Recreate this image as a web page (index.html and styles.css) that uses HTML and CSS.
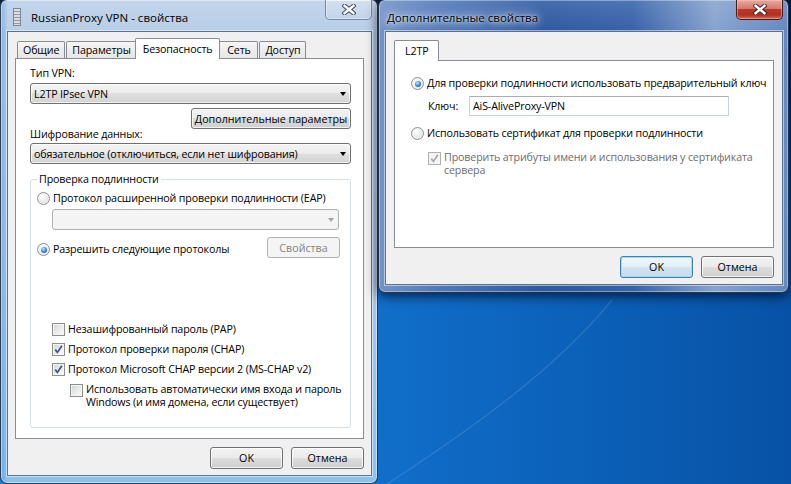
FILE: index.html
```html
<!DOCTYPE html>
<html lang="ru">
<head>
  <meta charset="UTF-8" />
  <title>RussianProxy VPN - свойства</title>
  <link rel="stylesheet" href="styles.css">
</head>
<body>
  <div class="desktop">
    <svg class="wall-arc" width="791" height="484" viewBox="0 0 791 484">
      <path d="M384 486 C470 430 555 370 612 300" fill="none" stroke="rgba(255,255,255,0.13)" stroke-width="1.2"/>
    </svg>

    <!-- Свойства подключения -->
    <div class="window win-main">
      <div class="titlebar">
        <svg class="title-icon" width="8" height="18" viewBox="0 0 8 18">
          <rect x="0.5" y="0.5" width="7" height="17" fill="#d9dee6" stroke="#7d8796"/>
          <path d="M1 3.5h6M1 6.5h6M1 9.5h6M1 12.5h6M1 15.5h6" stroke="#8f99a8"/>
        </svg>
        <span class="title-text">RussianProxy VPN - свойства</span>
        <span class="close-btn">
          <svg width="14" height="11" viewBox="0 0 14 11">
            <path d="M2.5 1.8L11.5 9.2M11.5 1.8L2.5 9.2" stroke="#3d4654" stroke-width="4.4" stroke-linecap="square"/>
            <path d="M2.5 1.8L11.5 9.2M11.5 1.8L2.5 9.2" stroke="#fff" stroke-width="2.4" stroke-linecap="square"/>
          </svg>
        </span>
      </div>
      <div class="client">
        <div class="tabs">
          <span class="tab">Общие</span>
          <span class="tab">Параметры</span>
          <span class="tab selected">Безопасность</span>
          <span class="tab">Сеть</span>
          <span class="tab">Доступ</span>
        </div>
        <div class="tab-panel panel-security">
          <div class="field-label">Тип VPN:</div>
          <div class="combo"><span>L2TP IPsec VPN</span><span class="combo-arrow"></span></div>
          <div class="btn-line"><button class="btn btn-wide">Дополнительные параметры</button></div>
          <div class="field-label label-tight">Шифрование данных:</div>
          <div class="combo combo-second"><span>обязательное (отключиться, если нет шифрования)</span><span class="combo-arrow"></span></div>

          <fieldset class="group">
            <legend>Проверка подлинности</legend>
            <div class="option option-eap"><span class="radio"></span>Протокол расширенной проверки подлинности (EAP)</div>
            <div class="combo disabled combo-eap"><span class="combo-arrow"></span></div>
            <div class="option-line">
              <div class="option option-allow"><span class="radio checked"></span>Разрешить следующие протоколы</div>
              <button class="btn disabled">Свойства</button>
            </div>
            <div class="protocols">
              <div class="check-option"><span class="checkbox"></span>Незашифрованный пароль (PAP)</div>
              <div class="check-option"><span class="checkbox"><svg width="11" height="11" viewBox="0 0 11 11"><path d="M2.2 5.6L4.4 8.4L8.9 1.8" fill="none" stroke="#3f5483" stroke-width="1.7"/></svg></span>Протокол проверки пароля (CHAP)</div>
              <div class="check-option"><span class="checkbox"><svg width="11" height="11" viewBox="0 0 11 11"><path d="M2.2 5.6L4.4 8.4L8.9 1.8" fill="none" stroke="#3f5483" stroke-width="1.7"/></svg></span>Протокол Microsoft CHAP версии 2 (MS-CHAP v2)</div>
              <div class="check-option multi nested"><span class="checkbox"></span><span class="multi-text">Использовать автоматически имя входа и пароль<br>Windows (и имя домена, если существует)</span></div>
            </div>
          </fieldset>
        </div>
        <div class="dialog-buttons">
          <button class="btn">OK</button>
          <button class="btn">Отмена</button>
        </div>
      </div>
    </div>

    <!-- Дополнительные свойства L2TP -->
    <div class="window win-extra">
      <div class="titlebar">
        <span class="title-text glow">Дополнительные свойства</span>
        <span class="close-btn close-active">
          <svg width="14" height="11" viewBox="0 0 14 11">
            <path d="M2.5 1.8L11.5 9.2M11.5 1.8L2.5 9.2" stroke="#3d2a2a" stroke-width="4.4" stroke-linecap="square"/>
            <path d="M2.5 1.8L11.5 9.2M11.5 1.8L2.5 9.2" stroke="#fff" stroke-width="2.4" stroke-linecap="square"/>
          </svg>
        </span>
      </div>
      <div class="client client-extra">
        <div class="tabs">
          <span class="tab selected single">L2TP</span>
        </div>
        <div class="tab-panel panel-l2tp">
          <div class="option"><span class="radio checked"></span>Для проверки подлинности использовать предварительный ключ</div>
          <div class="key-line">
            <span class="key-label">Ключ:</span>
            <span class="textbox">AiS-AliveProxy-VPN</span>
          </div>
          <div class="option option-cert"><span class="radio"></span>Использовать сертификат для проверки подлинности</div>
          <div class="check-option multi disabled cert-check">
            <span class="checkbox"><svg width="11" height="11" viewBox="0 0 11 11"><path d="M2.2 5.6L4.4 8.4L8.9 1.8" fill="none" stroke="#a7a7a7" stroke-width="1.7"/></svg></span>
            <span class="multi-text">Проверить атрибуты имени и использования у сертификата<br>сервера</span>
          </div>
        </div>
        <div class="dialog-buttons">
          <button class="btn default">OK</button>
          <button class="btn">Отмена</button>
        </div>
      </div>
    </div>
  </div>
</body>
</html>
```

FILE: styles.css
```css
* {
  box-sizing: border-box;
}

html, body {
  margin: 0;
  height: 100%;
}

body {
  font-family: "Open Sans", "Noto Sans", sans-serif;
  font-size: 10.7px;
  letter-spacing: -0.15px;
  color: #000;
  overflow: hidden;
}

/* рабочий стол */
.desktop {
  position: relative;
  width: 791px;
  height: 484px;
  overflow: hidden;
  background:
    linear-gradient(to bottom, rgba(4, 20, 52, 0.9) 0, rgba(4, 20, 52, 0.4) 140px, rgba(4, 20, 52, 0) 300px),
    linear-gradient(to right, #1d84da 0, #1170cc 45%, #0752a6 100%);
}

.wall-arc {
  position: absolute;
  left: 0;
  top: 0;
}

/* окна */
.window {
  position: absolute;
  top: -1px;
  display: flex;
  flex-direction: column;
  border: 1px solid rgba(22, 36, 58, 0.85);
  border-radius: 7px;
}

.win-main {
  left: 0;
  width: 378px;
  height: 485px;
  background:
    linear-gradient(to right, rgba(40, 125, 215, 0.35) 0, rgba(40, 125, 215, 0) 7px),
    linear-gradient(to bottom, #c3d5eb 0, #b6cce7 40px, #a9c6e7 60%, #8dc2ee 100%);
  box-shadow: inset 0 0 0 1px rgba(255, 255, 255, 0.45);
}

.win-extra {
  left: 378px;
  width: 411px;
  height: 294px;
  background:
    linear-gradient(to bottom, rgba(255, 255, 255, 0.12) 0, rgba(255, 255, 255, 0) 31px),
    linear-gradient(to right, #7393c7 0, #527ab9 14%, #2e5aa2 40%, #3763a9 62%, #87a3ce 82%, #6488c2 100%);
  box-shadow: 0 3px 12px rgba(0, 8, 30, 0.75), inset 0 0 0 1px rgba(255, 255, 255, 0.35);
}

.titlebar {
  flex: none;
  height: 31px;
  display: flex;
  align-items: flex-start;
  padding: 0 5px 0 8px;
}

.title-icon {
  margin: 8px 0 0 4px;
}

.title-text {
  margin: 10px 0 0 10px;
  font-size: 11.5px;
  letter-spacing: 0;
  line-height: 15px;
  white-space: nowrap;
}

.title-text.glow {
  margin-left: 0;
  text-shadow: 0 0 8px rgba(255, 255, 255, 0.95), 0 0 14px rgba(255, 255, 255, 0.8), 0 0 3px rgba(255, 255, 255, 0.9);
}

.close-btn {
  margin-left: auto;
  width: 47px;
  height: 20px;
  display: flex;
  align-items: center;
  justify-content: center;
  border: 1px solid rgba(60, 80, 110, 0.6);
  border-top: none;
  border-radius: 0 0 5px 5px;
  background: linear-gradient(to bottom, rgba(255, 255, 255, 0.28), rgba(255, 255, 255, 0.08));
  box-shadow: inset 0 0 0 1px rgba(255, 255, 255, 0.4);
}

.close-btn.close-active {
  border-color: #4a1a14;
  background: linear-gradient(to bottom, #e7aa9f 0, #d4796c 45%, #b93a2b 50%, #b02f20 78%, #d46a50 100%);
  box-shadow: inset 0 0 0 1px rgba(255, 210, 200, 0.45);
}

.client {
  flex: 1;
  display: flex;
  flex-direction: column;
  margin: 0 5px 7px 6px;
  padding: 6px 7px 6px;
  border: 1px solid #5d718b;
  background: #f0f0f0;
  box-shadow: 0 0 0 1px rgba(255, 255, 255, 0.5);
}

.client-extra {
  padding: 8px 8px 6px 8px;
}

/* вкладки */
.tabs {
  flex: none;
  display: flex;
  align-items: flex-end;
  height: 21px;
  margin-bottom: -1px;
  padding-left: 2px;
  position: relative;
  z-index: 1;
}

.tab {
  min-width: 39px;
  height: 17px;
  margin-bottom: 1px;
  margin-right: 1px;
  padding: 0 5px;
  line-height: 16px;
  text-align: center;
  border: 1px solid #898c95;
  border-bottom: none;
  border-radius: 2px 2px 0 0;
  background: linear-gradient(to bottom, #f5f5f5, #e6e6e6);
  white-space: nowrap;
}

.tab.selected {
  height: 21px;
  margin: 0 -1px 0 -3px;
  padding: 2px 7px 0;
  background: #fff;
}

.tab.single {
  margin-left: -2px;
  padding: 2px 10px 0;
}

.tab-panel {
  flex: 1;
  background: #fff;
  border: 1px solid #898c95;
}

/* Безопасность */
.panel-security {
  padding: 7px 12px 0 14px;
}

.field-label {
  line-height: 15px;
}

.label-tight {
  margin-top: -2px;
}

.combo {
  height: 21px;
  margin-top: 2px;
  display: flex;
  align-items: center;
  padding-left: 3px;
  border: 1px solid #707070;
  border-radius: 3px;
  background: linear-gradient(to bottom, #f3f3f3 0, #ececec 50%, #dfdfdf 50%, #d3d3d3 100%);
  box-shadow: inset 0 0 0 1px rgba(255, 255, 255, 0.7);
  white-space: nowrap;
}

.combo-second {
  margin-top: 1px;
}

.combo-arrow {
  margin-left: auto;
  margin-right: 4px;
  width: 0;
  height: 0;
  border-left: 3.5px solid transparent;
  border-right: 3.5px solid transparent;
  border-top: 4px solid #000;
}

.combo.disabled {
  border-color: #adb2b5;
  background: #f4f4f4;
  box-shadow: none;
}

.combo.disabled .combo-arrow {
  border-top-color: #a3a3a3;
}

.btn-line {
  display: flex;
  justify-content: flex-end;
  margin-top: 4px;
}

.btn {
  width: 73px;
  height: 22px;
  padding: 0;
  font: inherit;
  color: #000;
  white-space: nowrap;
  border: 1px solid #707070;
  border-radius: 3px;
  background: linear-gradient(to bottom, #f2f2f2 0, #ebebeb 50%, #dddddd 50%, #cfcfcf 100%);
  box-shadow: inset 0 0 0 1px rgba(255, 255, 255, 0.75);
}

.btn-wide {
  width: 160px;
  height: 21px;
}

.btn.disabled {
  height: 21px;
  color: #838383;
  border-color: #adb2b5;
  background: #f4f4f4;
  box-shadow: none;
}

.btn.default {
  border-color: #3c7fb1;
  box-shadow: inset 0 0 0 1px #9fdcf6;
  background: linear-gradient(to bottom, #eef6fb 0, #e4eff7 50%, #d3e4f1 50%, #c8dcec 100%);
}

.group {
  margin: 8px 0 0;
  padding: 0 10px 19px 6px;
  min-width: 0;
  border: 1px solid #d5dfe5;
  border-radius: 3px;
}

.group legend {
  padding: 0 2px;
  line-height: 15px;
}

.option {
  display: flex;
  align-items: center;
  line-height: 15px;
  white-space: nowrap;
}

.option-eap {
  margin-top: 4px;
}

.radio {
  flex: none;
  position: relative;
  width: 13px;
  height: 13px;
  margin-right: 3px;
  border: 1px solid #8e8f8f;
  border-radius: 50%;
  background: radial-gradient(circle at 40% 35%, #ffffff 0, #f0f0f0 35%, #d2d2d2 100%);
  box-shadow: inset 0 0 0 1px rgba(255, 255, 255, 0.6);
}

.radio.checked::after {
  content: "";
  position: absolute;
  left: 2.5px;
  top: 2.5px;
  width: 6px;
  height: 6px;
  border-radius: 50%;
  background: radial-gradient(circle at 40% 35%, #c7ecff 0, #3f97dc 45%, #0c4b90 100%);
}

.combo-eap {
  margin: 3px 0 0 15px;
  width: 287px;
}

.option-line {
  display: flex;
  align-items: flex-start;
  margin-top: 7px;
}

.option-allow {
  margin-top: 5px;
}

.option-line .btn {
  margin-left: auto;
}

.protocols {
  margin: 64px 0 0 15px;
  display: flex;
  flex-direction: column;
  gap: 5px;
}

.check-option {
  display: flex;
  align-items: center;
  line-height: 15px;
  white-space: nowrap;
}

.checkbox {
  flex: none;
  width: 13px;
  height: 13px;
  margin-right: 3px;
  display: flex;
  align-items: center;
  justify-content: center;
  border: 1px solid #8e8f8f;
  background: linear-gradient(135deg, #cfd3d8 0, #eeeeee 60%, #fbfbfb 100%);
  box-shadow: inset 0 0 0 1px #f4f4f4;
}

.check-option.multi {
  align-items: flex-start;
}

.check-option.multi .checkbox {
  margin-top: 1px;
}

.multi-text {
  line-height: 12.5px;
}

.nested {
  margin: 1px 0 0 18px;
}

.check-option.disabled {
  color: #6d6d6d;
}

.check-option.disabled .checkbox {
  border-color: #b1b1b1;
  background: #f4f4f4;
  box-shadow: none;
}

/* L2TP */
.panel-l2tp {
  padding: 15px 10px 0 16px;
}

.key-line {
  display: flex;
  align-items: center;
  margin: 5px 0 0 17px;
}

.key-label {
  width: 41px;
}

.textbox {
  width: 260px;
  height: 20px;
  padding-left: 3px;
  line-height: 18px;
  border: 1px solid #c8d3de;
  border-top-color: #abadb3;
  background: #fff;
}

.option-cert {
  margin-top: 10px;
}

.cert-check {
  margin: 10px 0 0 17px;
}

.dialog-buttons {
  flex: none;
  display: flex;
  justify-content: flex-end;
  gap: 8px;
  margin-top: 8px;
}
```
